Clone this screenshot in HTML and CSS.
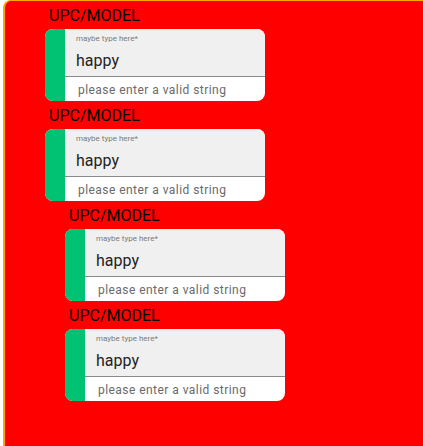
FILE: index.html
```html
<!DOCTYPE html>
<html>
<head>
<meta charset="utf-8">
<link rel="stylesheet" href="styles.css">
</head>
<body>
<div class="frame">
  <div class="group">
    <div class="title">UPC/MODEL</div>
    <div class="card">
      <div class="bar"></div>
      <div class="field">
        <div class="input">
          <div class="hint">maybe type here*</div>
          <div class="value">happy</div>
        </div>
        <div class="helper">please enter a valid string</div>
      </div>
    </div>
  </div>
  <div class="group">
    <div class="title">UPC/MODEL</div>
    <div class="card">
      <div class="bar"></div>
      <div class="field">
        <div class="input">
          <div class="hint">maybe type here*</div>
          <div class="value">happy</div>
        </div>
        <div class="helper">please enter a valid string</div>
      </div>
    </div>
  </div>
  <div class="nested">
    <div class="group">
      <div class="title">UPC/MODEL</div>
      <div class="card">
        <div class="bar"></div>
        <div class="field">
          <div class="input">
            <div class="hint">maybe type here*</div>
            <div class="value">happy</div>
          </div>
          <div class="helper">please enter a valid string</div>
        </div>
      </div>
    </div>
    <div class="group">
      <div class="title">UPC/MODEL</div>
      <div class="card">
        <div class="bar"></div>
        <div class="field">
          <div class="input">
            <div class="hint">maybe type here*</div>
            <div class="value">happy</div>
          </div>
          <div class="helper">please enter a valid string</div>
        </div>
      </div>
    </div>
  </div>
</div>
</body>
</html>
```

FILE: styles.css
```css
html, body {
  margin: 0;
  padding: 0;
  overflow: hidden;
  background: #ffffff;
  font-family: Roboto, "Liberation Sans", sans-serif;
}

.frame {
  margin: 0 0 0 3px;
  height: 100vh;
  box-sizing: border-box;
  border-top: 1px solid #ffa500;
  border-left: 2px solid #ffa500;
  border-top-left-radius: 8px;
  background: #ff0000;
  padding: 5px 0 0 40px;
}

.nested {
  padding-left: 20px;
}

.group {
  padding-bottom: 5px;
}

.title {
  font-size: 16px;
  line-height: 19px;
  color: #000000;
  margin-left: 4px;
  margin-bottom: 4px;
}

.card {
  display: flex;
  width: 220px;
  height: 72px;
  border-radius: 8px;
  overflow: hidden;
  background: #ffffff;
}

.bar {
  width: 20px;
  background: #00c272;
  flex: none;
}

.field {
  flex: 1;
  display: flex;
  flex-direction: column;
}

.input {
  background: #f0f0f0;
  border-bottom: 1px solid #8a8a8a;
  padding: 5px 0 0 11px;
  height: 42px;
}

.hint {
  font-size: 8px;
  line-height: 10px;
  color: #7a7a7a;
}

.value {
  margin-top: 7px;
  font-size: 16px;
  line-height: 20px;
  color: #222222;
}

.helper {
  padding: 6px 0 0 13px;
  font-size: 12px;
  line-height: 14px;
  letter-spacing: 0.45px;
  color: #6a6a6a;
}
```
